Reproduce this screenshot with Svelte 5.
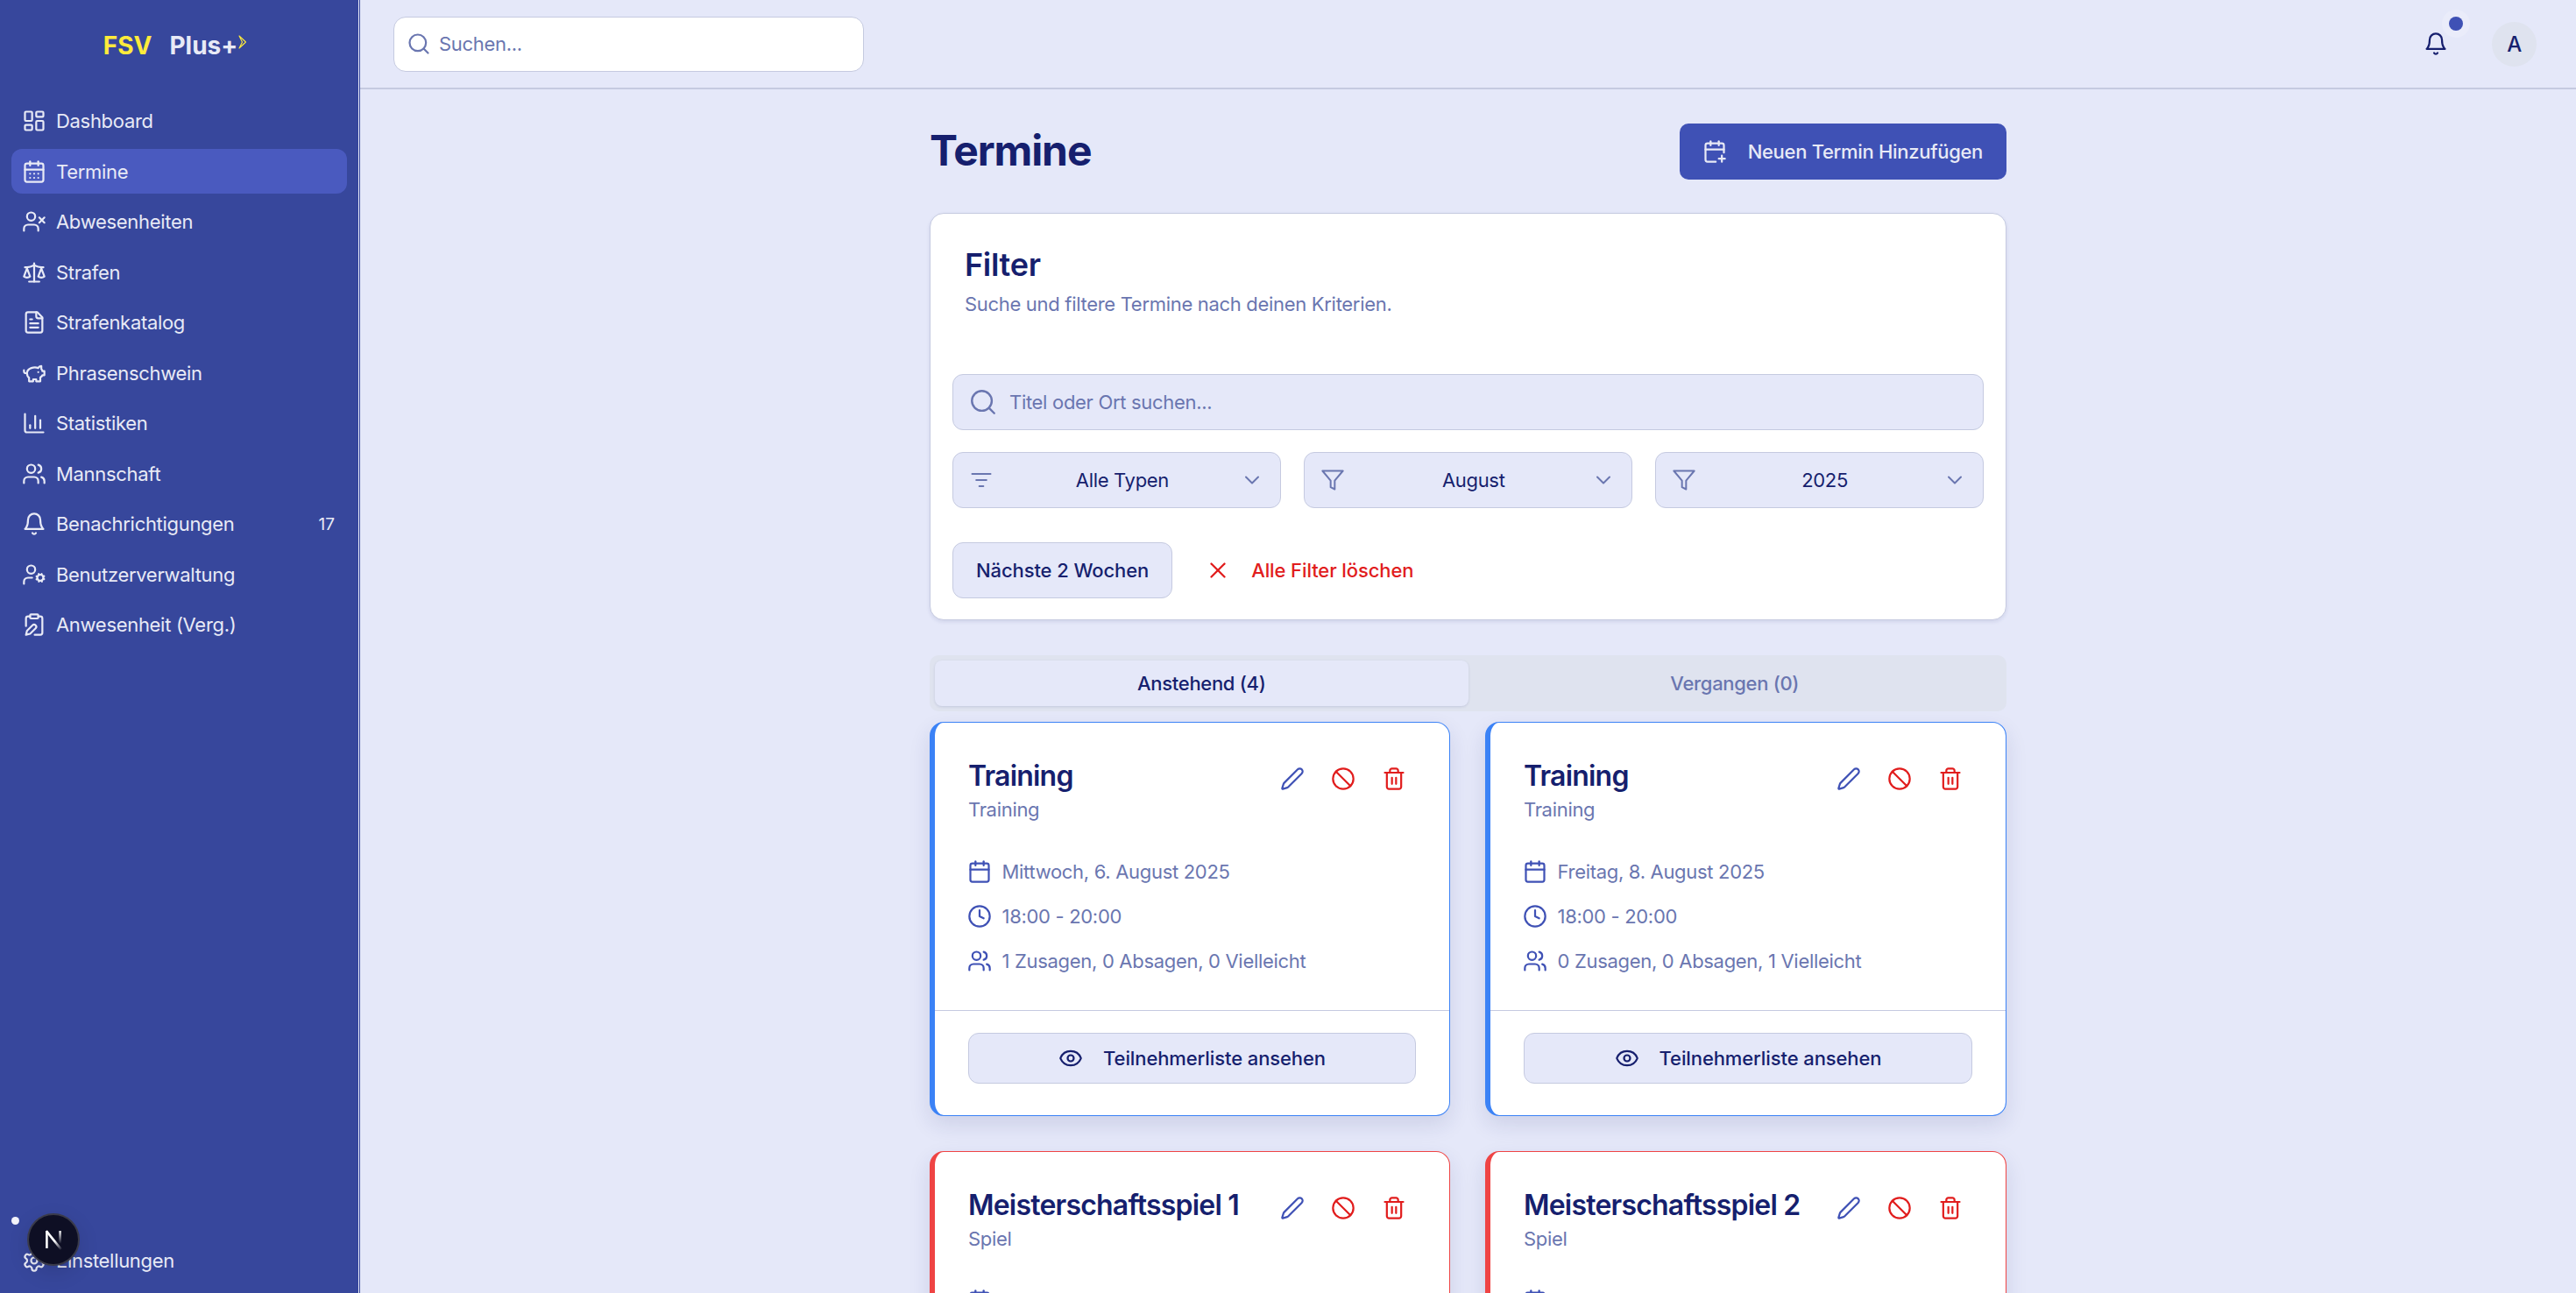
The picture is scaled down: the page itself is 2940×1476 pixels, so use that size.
<script lang="ts">
  const icons: Record<string, string> = {
    dashboard: '<rect x="3" y="3" width="7" height="9" rx="1"/><rect x="14" y="3" width="7" height="5" rx="1"/><rect x="14" y="12" width="7" height="9" rx="1"/><rect x="3" y="16" width="7" height="5" rx="1"/>',
    calendarDays: '<path d="M8 2v4"/><path d="M16 2v4"/><rect x="3" y="4" width="18" height="18" rx="2"/><path d="M3 10h18"/><path d="M8 14h.01"/><path d="M12 14h.01"/><path d="M16 14h.01"/><path d="M8 18h.01"/><path d="M12 18h.01"/><path d="M16 18h.01"/>',
    userX: '<path d="M16 21v-2a4 4 0 0 0-4-4H6a4 4 0 0 0-4 4v2"/><circle cx="9" cy="7" r="4"/><path d="m17 8 5 5"/><path d="m22 8-5 5"/>',
    scale: '<path d="m16 16 3-8 3 8c-.87.65-1.92 1-3 1s-2.13-.35-3-1Z"/><path d="m2 16 3-8 3 8c-.87.65-1.92 1-3 1s-2.13-.35-3-1Z"/><path d="M7 21h10"/><path d="M12 3v18"/><path d="M3 7h2c2 0 5-1 7-2 2 1 5 2 7 2h2"/>',
    fileText: '<path d="M15 2H6a2 2 0 0 0-2 2v16a2 2 0 0 0 2 2h12a2 2 0 0 0 2-2V7Z"/><path d="M14 2v4a2 2 0 0 0 2 2h4"/><path d="M10 9H8"/><path d="M16 13H8"/><path d="M16 17H8"/>',
    piggy: '<path d="M19 5c-1.5 0-2.8 1.4-3 2-3.5-1.5-11-.3-11 5 0 1.8 0 3 2 4.5V20h4v-2h3v2h4v-4c1-.5 1.7-1 2-2h2v-4h-2c0-1-.5-1.5-1-2V5z"/><path d="M2 9v1c0 1.1.9 2 2 2h1"/><path d="M16 11h.01"/>',
    chart: '<path d="M3 3v16a2 2 0 0 0 2 2h16"/><path d="M18 17V9"/><path d="M13 17V5"/><path d="M8 17v-3"/>',
    users: '<path d="M16 21v-2a4 4 0 0 0-4-4H6a4 4 0 0 0-4 4v2"/><circle cx="9" cy="7" r="4"/><path d="M22 21v-2a4 4 0 0 0-3-3.87"/><path d="M16 3.13a4 4 0 0 1 0 7.75"/>',
    bell: '<path d="M6 8a6 6 0 0 1 12 0c0 7 3 9 3 9H3s3-2 3-9"/><path d="M10.3 21a1.94 1.94 0 0 0 3.4 0"/>',
    userCog: '<circle cx="18" cy="15" r="3"/><circle cx="9" cy="7" r="4"/><path d="M10 15H6a4 4 0 0 0-4 4v2"/><path d="m21.7 16.4-.9-.3"/><path d="m15.2 13.9-.9-.3"/><path d="m16.6 18.7.3-.9"/><path d="m19.1 12.2.3-.9"/><path d="m19.6 18.7-.4-1"/><path d="m16.8 12.3-.4-1"/><path d="m14.3 16.6 1-.4"/><path d="m20.7 13.8 1-.4"/>',
    clipboardPen: '<rect x="8" y="2" width="8" height="4" rx="1"/><path d="M10.4 12.6a2 2 0 0 1 3 3L8 21l-4 1 1-4Z"/><path d="M16 4h2a2 2 0 0 1 2 2v14a2 2 0 0 1-2 2h-5.5"/><path d="M4 13.5V6a2 2 0 0 1 2-2h2"/>',
    settings: '<path d="M12.22 2h-.44a2 2 0 0 0-2 2v.18a2 2 0 0 1-1 1.73l-.43.25a2 2 0 0 1-2 0l-.15-.08a2 2 0 0 0-2.73.73l-.22.38a2 2 0 0 0 .73 2.73l.15.1a2 2 0 0 1 1 1.72v.51a2 2 0 0 1-1 1.74l-.15.09a2 2 0 0 0-.73 2.73l.22.38a2 2 0 0 0 2.73.73l.15-.08a2 2 0 0 1 2 0l.43.25a2 2 0 0 1 1 1.73V20a2 2 0 0 0 2 2h.44a2 2 0 0 0 2-2v-.18a2 2 0 0 1 1-1.73l.43-.25a2 2 0 0 1 2 0l.15.08a2 2 0 0 0 2.73-.73l.22-.39a2 2 0 0 0-.73-2.73l-.15-.08a2 2 0 0 1-1-1.74v-.5a2 2 0 0 1 1-1.74l.15-.09a2 2 0 0 0 .73-2.73l-.22-.38a2 2 0 0 0-2.73-.73l-.15.08a2 2 0 0 1-2 0l-.43-.25a2 2 0 0 1-1-1.73V4a2 2 0 0 0-2-2z"/><circle cx="12" cy="12" r="3"/>',
    search: '<circle cx="11" cy="11" r="8"/><path d="m21 21-4.3-4.3"/>',
    calendarPlus: '<path d="M8 2v4"/><path d="M16 2v4"/><path d="M21 13V6a2 2 0 0 0-2-2H5a2 2 0 0 0-2 2v14a2 2 0 0 0 2 2h8"/><path d="M3 10h18"/><path d="M16 19h6"/><path d="M19 16v6"/>',
    listFilter: '<path d="M3 6h18"/><path d="M7 12h10"/><path d="M10 18h4"/>',
    funnel: '<polygon points="22 3 2 3 10 12.46 10 19 14 21 14 12.46 22 3"/>',
    chevron: '<path d="m6 9 6 6 6-6"/>',
    x: '<path d="M18 6 6 18"/><path d="m6 6 12 12"/>',
    pen: '<path d="M21.174 6.812a1 1 0 0 0-3.986-3.987L3.842 16.174a2 2 0 0 0-.5.83l-1.321 4.352a.5.5 0 0 0 .623.622l4.353-1.32a2 2 0 0 0 .83-.497z"/>',
    ban: '<circle cx="12" cy="12" r="10"/><path d="m4.9 4.9 14.2 14.2"/>',
    trash: '<path d="M3 6h18"/><path d="M19 6v14c0 1-1 2-2 2H7c-1 0-2-1-2-2V6"/><path d="M8 6V4c0-1 1-2 2-2h4c1 0 2 1 2 2v2"/><path d="M10 11v6"/><path d="M14 11v6"/>',
    calendar: '<path d="M8 2v4"/><path d="M16 2v4"/><rect x="3" y="4" width="18" height="18" rx="2"/><path d="M3 10h18"/>',
    clock: '<circle cx="12" cy="12" r="10"/><path d="M12 6v6l4 2"/>',
    eye: '<path d="M2.062 12.348a1 1 0 0 1 0-.696 10.75 10.75 0 0 1 19.876 0 1 1 0 0 1 0 .696 10.75 10.75 0 0 1-19.876 0"/><circle cx="12" cy="12" r="3"/>'
  };

  const navItems = [
    { label: 'Dashboard', icon: 'dashboard' },
    { label: 'Termine', icon: 'calendarDays', active: true },
    { label: 'Abwesenheiten', icon: 'userX' },
    { label: 'Strafen', icon: 'scale' },
    { label: 'Strafenkatalog', icon: 'fileText' },
    { label: 'Phrasenschwein', icon: 'piggy' },
    { label: 'Statistiken', icon: 'chart' },
    { label: 'Mannschaft', icon: 'users' },
    { label: 'Benachrichtigungen', icon: 'bell', count: 17 },
    { label: 'Benutzerverwaltung', icon: 'userCog' },
    { label: 'Anwesenheit (Verg.)', icon: 'clipboardPen' }
  ];

  const selects = [
    { label: 'Alle Typen', icon: 'listFilter' },
    { label: 'August', icon: 'funnel' },
    { label: '2025', icon: 'funnel' }
  ];

  const events = [
    { title: 'Training', type: 'Training', kind: 'training', date: 'Mittwoch, 6. August 2025', time: '18:00 - 20:00', rsvp: '1 Zusagen, 0 Absagen, 0 Vielleicht' },
    { title: 'Training', type: 'Training', kind: 'training', date: 'Freitag, 8. August 2025', time: '18:00 - 20:00', rsvp: '0 Zusagen, 0 Absagen, 1 Vielleicht' },
    { title: 'Meisterschaftsspiel 1', type: 'Spiel', kind: 'match' },
    { title: 'Meisterschaftsspiel 2', type: 'Spiel', kind: 'match' }
  ];
</script>

{#snippet icon(name: string, cls = '')}
  <svg class="icon {cls}" viewBox="0 0 24 24" fill="none" stroke="currentColor" stroke-linecap="round" stroke-linejoin="round">{@html icons[name]}</svg>
{/snippet}

<div class="shell">
  <aside class="sidebar">
    <div class="logo">
      <span class="logo-fsv">FSV</span>
      <span class="logo-plus">Plus+</span>
      <svg class="logo-arrow" viewBox="0 0 10 16" fill="none"><path d="M1 1l7.5 7L1 15l3.5-7z" stroke="#ffeb3b" stroke-width="1.1" stroke-linejoin="round"/></svg>
    </div>
    <nav class="nav">
      {#each navItems as item}
        <div class="nav-item" class:active={item.active}>
          {@render icon(item.icon, 'nav-icon')}
          <span class="nav-label">{item.label}</span>
          {#if item.count}<span class="nav-count">{item.count}</span>{/if}
        </div>
      {/each}
    </nav>
    <div class="nav-item settings">
      {@render icon('settings', 'nav-icon')}
      <span class="nav-label">Einstellungen</span>
    </div>
    <span class="dev-dot"></span>
    <div class="dev-badge">
      <svg viewBox="0 0 24 24" width="28" height="28" fill="none">
        <defs>
          <linearGradient id="nfade" gradientUnits="userSpaceOnUse" x1="5" y1="3" x2="20" y2="22">
            <stop offset="0.55" stop-color="#fff" />
            <stop offset="1" stop-color="#fff" stop-opacity="0" />
          </linearGradient>
          <linearGradient id="nstem" gradientUnits="userSpaceOnUse" x1="0" y1="3" x2="0" y2="16">
            <stop offset="0" stop-color="#fff" />
            <stop offset="1" stop-color="#fff" stop-opacity="0" />
          </linearGradient>
        </defs>
        <path d="M5.5 20.5V3.5" stroke="#fff" stroke-width="2.2" />
        <path d="M5 3.5l14.5 18" stroke="url(#nfade)" stroke-width="2.2" />
        <path d="M18.5 3.5v13" stroke="url(#nstem)" stroke-width="2.2" />
      </svg>
    </div>
  </aside>

  <div class="main">
    <header class="topbar">
      <div class="top-search">
        {@render icon('search', 'top-search-icon')}
        <span>Suchen...</span>
      </div>
      <div class="top-actions">
        <div class="bell">
          {@render icon('bell', 'bell-icon')}
          <span class="bell-dot"></span>
        </div>
        <div class="avatar">A</div>
      </div>
    </header>

    <main class="page">
      <div class="page-head">
        <h1>Termine</h1>
        <button class="primary">
          {@render icon('calendarPlus', 'btn-icon')}
          Neuen Termin Hinzufügen
        </button>
      </div>

      <section class="filter-card">
        <div class="filter-head">
          <h2>Filter</h2>
          <p>Suche und filtere Termine nach deinen Kriterien.</p>
        </div>
        <div class="filter-body">
          <div class="filter-search">
            {@render icon('search', 'filter-search-icon')}
            <span>Titel oder Ort suchen...</span>
          </div>
          <div class="select-row">
            {#each selects as s}
              <div class="select">
                {@render icon(s.icon, 'select-icon')}
                <span class="select-label">{s.label}</span>
                {@render icon('chevron', 'select-chevron')}
              </div>
            {/each}
          </div>
          <div class="quick-row">
            <button class="outline">Nächste 2 Wochen</button>
            <button class="clear">
              {@render icon('x', 'clear-icon')}
              Alle Filter löschen
            </button>
          </div>
        </div>
      </section>

      <div class="tabs">
        <div class="tab current">Anstehend (4)</div>
        <div class="tab">Vergangen (0)</div>
      </div>

      <div class="event-grid">
        {#each events as ev}
          <article class="event {ev.kind}">
            <div class="event-head">
              <div class="event-title">
                <h3>{ev.title}</h3>
                <p>{ev.type}</p>
              </div>
              <div class="event-actions">
                {@render icon('pen', 'action pen')}
                {@render icon('ban', 'action red')}
                {@render icon('trash', 'action red')}
              </div>
            </div>
            <div class="event-body">
              <div class="event-row">{@render icon('calendar', 'row-icon')}<span>{ev.date}</span></div>
              {#if ev.date}
                <div class="event-row">{@render icon('clock', 'row-icon')}<span>{ev.time}</span></div>
                <div class="event-row">{@render icon('users', 'row-icon')}<span>{ev.rsvp}</span></div>
              {/if}
            </div>
            {#if ev.date}
              <div class="event-foot">
                <button class="outline wide">
                  {@render icon('eye', 'eye-icon')}
                  Teilnehmerliste ansehen
                </button>
              </div>
            {/if}
          </article>
        {/each}
      </div>
    </main>
  </div>
</div>

<style>
  :global(body) {
    margin: 0;
    background: #e5e8f9;
  }

  .shell {
    display: flex;
    height: 1476px;
    overflow: hidden;
    font-family: Inter, "Liberation Sans", sans-serif;
    letter-spacing: -0.014em;
    color: #161f6e;
    font-size: 22px;
    background: #e5e8f9;
  }

  .icon {
    display: block;
    flex: none;
    width: 28px;
    height: 28px;
    stroke-width: 1.9;
  }

  button {
    font: inherit;
    letter-spacing: inherit;
    color: inherit;
    cursor: pointer;
  }

  /* sidebar */
  .sidebar {
    position: relative;
    flex: none;
    box-sizing: border-box;
    width: 411px;
    height: 100%;
    display: flex;
    flex-direction: column;
    background: #37479c;
    border-right: 1px solid #37479c;
    box-shadow: inset -1px 0 0 #eef0fb;
    color: #e8eaf6;
  }

  .logo {
    height: 102px;
    display: flex;
    align-items: center;
    justify-content: center;
    padding: 2px 10px 0 0;
    box-sizing: border-box;
    font-size: 28px;
    font-weight: 700;
    letter-spacing: 0;
  }

  .logo-fsv {
    color: #ffeb3b;
    margin-right: 20px;
  }

  .logo-plus {
    color: #e8eaf6;
  }

  .logo-arrow {
    width: 10px;
    height: 16px;
    margin: -8px 0 0 1px;
  }

  .nav {
    flex: 1;
    display: flex;
    flex-direction: column;
    gap: 6.5px;
    padding: 10.5px 14px 0 13px;
  }

  .nav-item {
    display: flex;
    align-items: center;
    gap: 11px;
    height: 51px;
    padding: 0 14px 0 12px;
    border-radius: 12px;
    font-size: 22px;
  }

  .nav-item.active {
    background: #4a5abf;
  }

  .nav-label {
    flex: 1;
  }

  .nav-count {
    font-size: 19px;
    letter-spacing: 0;
  }

  .settings {
    margin: 0 14px 12px 13px;
  }

  .dev-dot {
    position: absolute;
    left: 13px;
    top: 1389px;
    width: 9px;
    height: 9px;
    border-radius: 50%;
    background: #f2f3fa;
  }

  .dev-badge {
    position: absolute;
    left: 31px;
    top: 1385px;
    width: 60px;
    height: 60px;
    box-sizing: border-box;
    border: 2px solid #3a3b4a;
    border-radius: 50%;
    background: #0e0f24;
    display: flex;
    align-items: center;
    justify-content: center;
    box-shadow: 0 8px 24px rgba(0, 0, 0, 0.12);
  }

  /* top bar */
  .main {
    flex: 1;
    min-width: 0;
    display: flex;
    flex-direction: column;
  }

  .topbar {
    flex: none;
    height: 102px;
    box-sizing: border-box;
    border-bottom: 2px solid #c5cae0;
    display: flex;
    align-items: center;
    justify-content: space-between;
    padding: 0 45px 0 38px;
  }

  .top-search {
    box-sizing: border-box;
    width: 537px;
    height: 63px;
    display: flex;
    align-items: center;
    gap: 9px;
    padding: 0 14px;
    background: #fff;
    border: 1.5px solid #c5cae0;
    border-radius: 14px;
    color: #6a76b0;
    font-size: 22px;
  }

  .top-actions {
    display: flex;
    align-items: center;
    gap: 50px;
  }

  .bell {
    position: relative;
  }

  .bell-dot {
    position: absolute;
    left: 29px;
    top: -17px;
    width: 16px;
    height: 16px;
    border-radius: 50%;
    background: #3f51b5;
    box-shadow: 0 0 0 8px rgba(255, 255, 255, 0.2);
  }

  .avatar {
    width: 51px;
    height: 51px;
    border-radius: 50%;
    background: #dfe3ef;
    display: flex;
    align-items: center;
    justify-content: center;
    font-weight: 500;
    font-size: 24px;
  }

  /* page */
  .page {
    width: 1229px;
    margin-left: 650px;
    padding-top: 39px;
  }

  .page-head {
    display: flex;
    align-items: center;
    justify-content: space-between;
    height: 64px;
    margin-bottom: 38px;
  }

  h1 {
    margin: 0 0 3px;
    font-size: 48px;
    font-weight: 700;
    letter-spacing: -1.1px;
    line-height: 1;
  }

  .primary {
    display: flex;
    align-items: center;
    gap: 24px;
    height: 64px;
    box-sizing: border-box;
    padding: 0 27px 0 26px;
    border: none;
    border-radius: 10px;
    background: #3f51b5;
    color: #e8eaf6;
    font-size: 22px;
    font-weight: 500;
  }

  .filter-card {
    box-sizing: border-box;
    height: 465px;
    background: #fff;
    border: 1.5px solid #c5cae0;
    border-radius: 16px;
    box-shadow: 0 2px 4px rgba(30, 40, 110, 0.1);
    padding: 0 25.5px 0 25px;
    margin-bottom: 40px;
  }

  .filter-head {
    height: 183px;
    padding: 36px 14px 0;
    box-sizing: border-box;
  }

  h2 {
    margin: 0;
    font-size: 36px;
    font-weight: 600;
    line-height: 44px;
  }

  .filter-head p {
    margin: 8px 0 0;
    color: #6a76b0;
    font-size: 22px;
    line-height: 30px;
  }

  .filter-body {
    display: flex;
    flex-direction: column;
    gap: 25px;
  }

  .filter-search {
    box-sizing: border-box;
    height: 64px;
    display: flex;
    align-items: center;
    gap: 13px;
    padding: 0 17px;
    background: #e5e8f9;
    border: 1.5px solid #c5cae0;
    border-radius: 12px;
    color: #6a76b0;
    font-size: 22px;
  }

  .filter-search :global(.filter-search-icon) {
    width: 34px;
    height: 34px;
    stroke-width: 1.7;
  }

  .select-row {
    display: grid;
    grid-template-columns: repeat(3, 1fr);
    gap: 26px;
  }

  .select {
    box-sizing: border-box;
    height: 64px;
    display: flex;
    align-items: center;
    padding: 0 18px;
    background: #e5e8f9;
    border: 1.5px solid #c5cae0;
    border-radius: 12px;
    font-size: 22px;
    color: #161f6e;
  }

  .select-label {
    flex: 1;
    text-align: center;
    padding-left: 13px;
  }

  .select :global(.select-icon),
  .select :global(.select-chevron) {
    stroke-width: 1.7;
    color: #6a76b0;
  }

  .quick-row {
    display: flex;
    align-items: center;
    gap: 28px;
    margin-top: 14px;
  }

  .outline {
    box-sizing: border-box;
    height: 64px;
    padding: 0 26px;
    background: #e5e8f9;
    border: 1.5px solid #c5cae0;
    border-radius: 12px;
    font-weight: 500;
    font-size: 22px;
    letter-spacing: -0.1px;
  }

  .clear {
    display: flex;
    align-items: center;
    gap: 23px;
    padding: 0 16px 0 9px;
    background: none;
    border: none;
    color: #e11d1d;
    font-weight: 500;
    font-size: 22px;
    letter-spacing: -0.1px;
  }

  .clear :global(.clear-icon) {
    width: 30px;
    height: 30px;
  }

  .tabs {
    box-sizing: border-box;
    height: 64px;
    display: grid;
    grid-template-columns: 1fr 1fr;
    padding: 6px;
    background: #dfe3ef;
    border-radius: 10px;
    margin-bottom: 12px;
  }

  .tab {
    display: flex;
    align-items: center;
    justify-content: center;
    font-size: 22px;
    font-weight: 500;
    color: #6a76b0;
    border-radius: 8px;
  }

  .tab.current {
    background: #e5e8f9;
    color: #161f6e;
    box-shadow: 0 1px 3px rgba(30, 40, 110, 0.14);
  }

  .event-grid {
    display: grid;
    grid-template-columns: 594px 1fr;
    gap: 40px;
  }

  .event {
    box-sizing: border-box;
    height: 450px;
    display: flex;
    flex-direction: column;
    background: #fff;
    border: 1.5px solid #3b82f6;
    border-left-width: 6px;
    border-radius: 16px;
    box-shadow: 0 10px 24px rgba(30, 40, 110, 0.12);
  }

  .event.match {
    border-color: #ef4444;
  }

  .event-head {
    display: flex;
    justify-content: space-between;
    height: 128px;
    box-sizing: border-box;
    padding: 42px 49.5px 0 38px;
  }

  h3 {
    margin: 0;
    font-size: 32px;
    font-weight: 600;
    letter-spacing: -0.8px;
    line-height: 38px;
  }

  .event-title p {
    margin: 5px 0 0;
    color: #6a76b0;
    font-size: 22px;
    line-height: 28px;
  }

  .event-actions {
    display: flex;
    gap: 30px;
    padding-top: 8px;
  }

  .event-actions :global(.pen) {
    color: #3f51b5;
  }

  .event-actions :global(.red) {
    color: #e11d1d;
  }

  .event-body {
    flex: 1;
    display: flex;
    flex-direction: column;
    gap: 15px;
    padding: 24px 38px 0 36.5px;
  }

  .event-row {
    display: flex;
    align-items: center;
    gap: 12px;
    height: 36px;
    color: #6a76b0;
    font-size: 22px;
  }

  .event-row :global(.row-icon) {
    color: #3f51b5;
  }

  .event-foot {
    border-top: 1.5px solid #c5cae0;
    padding: 25px 38px 36.5px;
  }

  .wide {
    width: 100%;
    height: 58px;
    display: flex;
    align-items: center;
    justify-content: center;
    gap: 23px;
  }
</style>
